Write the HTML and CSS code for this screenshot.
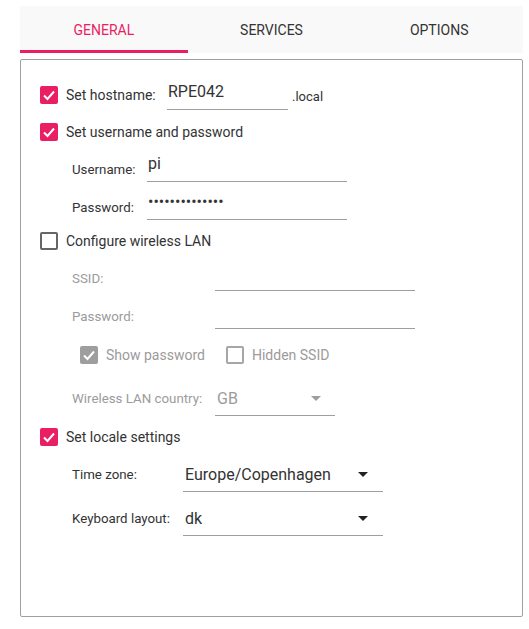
FILE: index.html
```html
<!DOCTYPE html>
<html>
<head>
<meta charset="utf-8">
<link rel="stylesheet" href="styles.css">
</head>
<body>
<div class="tabs">
  <div class="tab active">GENERAL</div>
  <div class="tab">SERVICES</div>
  <div class="tab">OPTIONS</div>
</div>
<div class="panel">
  <div class="check-row host-row">
    <span class="cb on"><svg viewBox="0 0 18 18" width="18" height="18"><polyline points="4,9.5 7.5,13 14,5.5" fill="none" stroke="#fff" stroke-width="2"/></svg></span>
    <span class="host-label">Set hostname:</span>
    <div class="input host-input">RPE042</div>
    <span class="suffix">.local</span>
  </div>

  <div class="check-row">
    <span class="cb on"><svg viewBox="0 0 18 18" width="18" height="18"><polyline points="4,9.5 7.5,13 14,5.5" fill="none" stroke="#fff" stroke-width="2"/></svg></span>
    <span>Set username and password</span>
  </div>
  <div class="field user">
    <span class="lab">Username:</span>
    <div class="input">pi</div>
  </div>
  <div class="field user">
    <span class="lab">Password:</span>
    <div class="input dots">••••••••••••••</div>
  </div>

  <div class="check-row">
    <span class="cb off"></span>
    <span>Configure wireless LAN</span>
  </div>
  <div class="field wifi disabled">
    <span class="lab">SSID:</span>
    <div class="input"></div>
  </div>
  <div class="field wifi disabled">
    <span class="lab">Password:</span>
    <div class="input"></div>
  </div>
  <div class="check-row sub disabled">
    <span class="cb on"><svg viewBox="0 0 18 18" width="18" height="18"><polyline points="4,9.5 7.5,13 14,5.5" fill="none" stroke="#fff" stroke-width="2"/></svg></span>
    <span>Show password</span>
    <span class="cb off second"></span>
    <span>Hidden SSID</span>
  </div>
  <div class="field combo-row wifi disabled">
    <span class="lab">Wireless LAN country:</span>
    <div class="combo short"><span>GB</span><span class="arrow"></span></div>
  </div>

  <div class="check-row">
    <span class="cb on"><svg viewBox="0 0 18 18" width="18" height="18"><polyline points="4,9.5 7.5,13 14,5.5" fill="none" stroke="#fff" stroke-width="2"/></svg></span>
    <span>Set locale settings</span>
  </div>
  <div class="field combo-row locale">
    <span class="lab">Time zone:</span>
    <div class="combo"><span>Europe/Copenhagen</span><span class="arrow"></span></div>
  </div>
  <div class="field combo-row locale">
    <span class="lab">Keyboard layout:</span>
    <div class="combo"><span>dk</span><span class="arrow"></span></div>
  </div>
</div>
</body>
</html>
```

FILE: styles.css
```css
body {
  margin: 6px 6px 0 20px;
  font-family: Roboto, "Liberation Sans", sans-serif;
  color: #333;
  background: #fff;
}

.tabs {
  display: flex;
  height: 47px;
  background: #f9f9f9;
}

.tab {
  flex: 1;
  display: flex;
  align-items: center;
  justify-content: center;
  font-size: 14px;
  color: #333;
}

.tab.active {
  color: #e91e63;
  box-shadow: inset 0 -3px 0 #e91e63;
}

.panel {
  margin-top: 6px;
  height: 558px;
  box-sizing: border-box;
  border: 1px solid #a0a0a0;
  border-radius: 2px;
  padding: 20px 0 0 19px;
}

.check-row {
  display: flex;
  align-items: center;
  height: 30px;
  font-size: 14px;
  line-height: 16px;
}

.cb {
  flex: none;
  display: flex;
  width: 18px;
  height: 18px;
  box-sizing: border-box;
  border-radius: 2px;
  margin-right: 8px;
}

.cb.on {
  background: #e91e63;
}

.cb.off {
  border: 2px solid #666;
  background: #fff;
}

.disabled {
  color: #9b9b9b;
}

.disabled .cb.on {
  background: #9e9e9e;
}

.disabled .cb.off {
  border-color: #a6a6a6;
}

.cb.second {
  margin-left: 21px;
}

.host-label {
  width: 101px;
}

.input {
  box-sizing: border-box;
  width: 200px;
  height: 100%;
  display: flex;
  align-items: flex-end;
  border-bottom: 1px solid #9e9e9e;
  font-size: 16px;
  line-height: 19px;
  padding: 0 0 8px 1px;
}

.host-input {
  width: 121px;
  align-self: stretch;
}

.suffix {
  font-size: 13px;
  line-height: 15px;
  margin-left: 4px;
  margin-top: 3px;
}

.dots {
  letter-spacing: 0;
}

.field {
  display: flex;
  height: 28px;
  margin-left: 32px;
}

.combo-row {
  height: 34px;
}

.lab {
  flex: none;
  align-self: flex-end;
  font-size: 13.3px;
  line-height: 15px;
  padding-bottom: 5px;
}

.combo-row .lab {
  padding-bottom: 10px;
}

.user .lab { width: 75px; }
.wifi .lab { width: 143px; }
.locale .lab { width: 111px; }

.combo {
  box-sizing: border-box;
  width: 200px;
  display: flex;
  align-items: flex-end;
  justify-content: space-between;
  border-bottom: 1px solid #9e9e9e;
  font-size: 16px;
  line-height: 19px;
  padding: 0 15px 7px 2px;
}

.combo.short {
  width: 120px;
  padding-right: 14px;
}

.arrow {
  width: 0;
  height: 0;
  border-left: 5px solid transparent;
  border-right: 5px solid transparent;
  border-top: 5px solid #222;
  margin-bottom: 7px;
}

.disabled .arrow {
  border-top-color: #9e9e9e;
}

.sub {
  margin-left: 40px;
}

.check-row + .check-row { margin-top: 7px; }
.check-row + .field { margin-top: 7px; }
.check-row + .combo-row { margin-top: 6px; }
.check-row.sub + .field { margin-top: 12px; }
.field + .field { margin-top: 10px; }
.field + .check-row { margin-top: 6px; }
.field + .check-row.sub { margin-top: 11px; }
```
